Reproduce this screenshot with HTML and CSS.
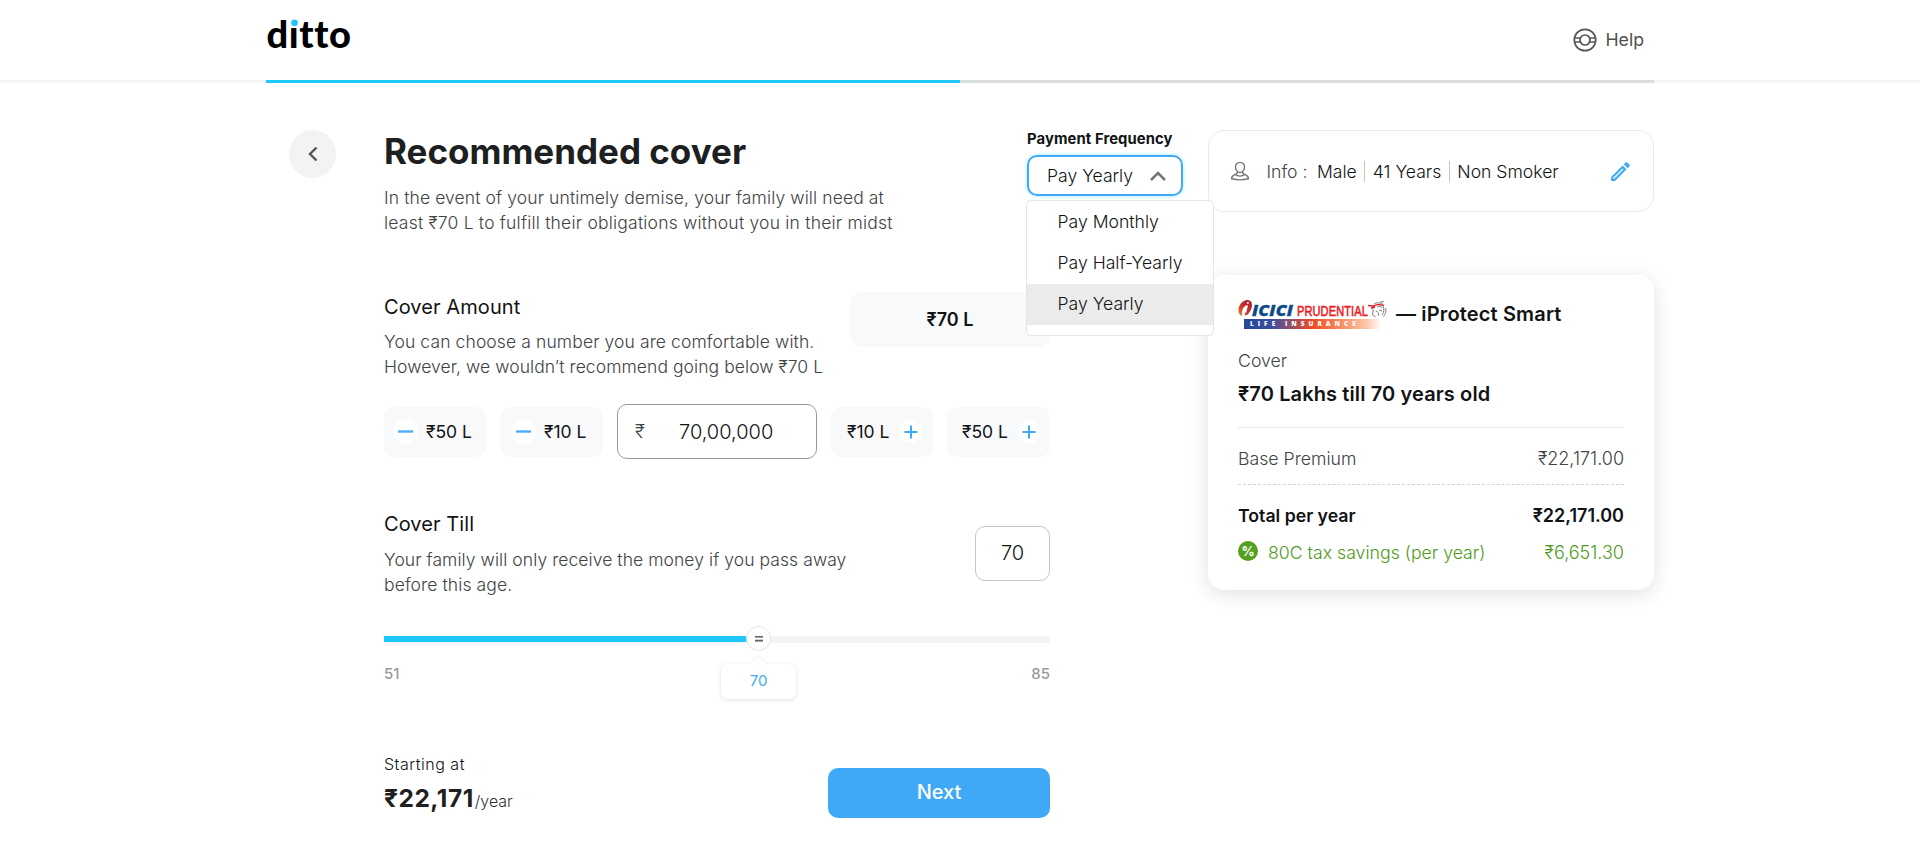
FILE: index.html
```html
<!DOCTYPE html>
<html lang="en">
<head>
<meta charset="utf-8">
<title>Ditto – Recommended cover</title>
<link rel="stylesheet" href="styles.css">
</head>
<body>
<header class="topbar">
  <div class="topbar-inner">
    <svg class="brand" width="90" height="44" viewBox="0 0 90 44" role="img">
      <text class="brand-text" x="-.5" y="38" textLength="84.500" lengthAdjust="spacing">ditto</text>
      <rect x="22.500" y="6" width="10" height="11.500" fill="#fff"/>
      <circle cx="27.500" cy="12.800" r="3.400" fill="#1ec8ff"/>
    </svg>
    <a class="help">
      <svg width="24" height="24" viewBox="0 0 24 24" fill="none" stroke="#555" stroke-width="1.7"><circle cx="12" cy="12" r="10.700"/><circle cx="12" cy="12" r="5"/><path d="M1.600 10h5.600M1.600 14h5.600M16.800 10h5.600M16.800 14h5.600"/></svg>
      <span>Help</span>
    </a>
  </div>
</header>
<div class="progress"><div class="progress-track"><div class="progress-fill"></div></div></div>

<main class="page">
  <button class="back" aria-label="Back">
    <svg width="12" height="18" viewBox="0 0 12 18" fill="none" stroke="#555" stroke-width="2.4"><path d="M9.500 2.500 3 9l6.500 6.500"/></svg>
  </button>

  <section class="planner">
    <div class="intro">
      <div class="intro-text">
        <h1>Recommended cover</h1>
        <p class="desc"><span class="track-2">In the event of your untimely demise, your family will need at</span><br><span class="track-3">least ₹70 L to fulfill their obligations without you in their midst</span></p>
      </div>
      <div class="frequency">
        <div class="frequency-label">Payment Frequency</div>
        <div class="select">
          <span>Pay Yearly</span>
          <svg width="16" height="10" viewBox="0 0 16 10" fill="none" stroke="#757575" stroke-width="2.6"><path d="M1 9l7-7 7 7"/></svg>
        </div>
        <ul class="menu">
          <li>Pay Monthly</li>
          <li>Pay Half-Yearly</li>
          <li class="active">Pay Yearly</li>
        </ul>
      </div>
    </div>

    <div class="field amount">
      <div>
        <h2>Cover Amount</h2>
        <p class="desc"><span class="track-2">You can choose a number you are comfortable with.</span><br><span class="track-1">However, we wouldn’t recommend going below ₹70 L</span></p>
      </div>
      <div class="amount-badge">₹70 L</div>
    </div>

    <div class="stepper">
      <button class="step minus"><i><svg width="15" height="3"><rect y=".3" width="15" height="2.400" fill="#4aaef8"/></svg></i><span>₹50 L</span></button>
      <button class="step minus inner"><i><svg width="15" height="3"><rect y=".3" width="15" height="2.400" fill="#4aaef8"/></svg></i><span>₹10 L</span></button>
      <div class="amount-input"><span class="currency">₹</span><span>70,00,000</span></div>
      <button class="step plus inner"><span>₹10 L</span><i><svg width="14" height="14" stroke="#3fa9f8" stroke-width="2"><path d="M7 .5v13M.5 7h13"/></svg></i></button>
      <button class="step plus"><span>₹50 L</span><i><svg width="14" height="14" stroke="#3fa9f8" stroke-width="2"><path d="M7 .5v13M.5 7h13"/></svg></i></button>
    </div>

    <div class="field till">
      <div>
        <h2>Cover Till</h2>
        <p class="desc"><span class="track-1">Your family will only receive the money if you pass away</span><br><span class="track-2">before this age.</span></p>
      </div>
      <div class="age-input">70</div>
    </div>

    <div class="slider">
      <div class="slider-fill" style="width:374px"></div>
      <div class="knob" style="left:374px"><svg width="8" height="6" fill="#666"><rect width="8" height="1.600"/><rect y="3.700" width="8" height="1.900"/></svg></div>
      <div class="bubble" style="left:374px">70</div>
    </div>
    <div class="range"><span>51</span><span>85</span></div>

    <div class="actions">
      <div>
        <div class="starting">Starting at</div>
        <div class="price"><b>₹22,171</b><span>/year</span></div>
      </div>
      <button class="next">Next</button>
    </div>
  </section>

  <aside class="summary">
    <div class="info">
      <svg class="person" width="20" height="20" viewBox="0 0 20 20" fill="none" stroke="#757575" stroke-width="1.400"><path d="M10 1.400c-2.900 0-4.600 2-4.500 4.700.1 2.700 1.800 5.500 4.500 5.500s4.400-2.800 4.500-5.500C14.600 3.400 12.900 1.400 10 1.400z"/><path d="M7.400 10.900c0 1.800-1 2.200-3 2.900-1.900.7-2.800 1.800-2.800 4 4.500 1.200 12.300 1.200 16.800 0 0-2.200-.9-3.300-2.800-4-2-.7-3-1.100-3-2.900M6 13.400c1.200 2.300 6.800 2.300 8 0"/></svg>
      <span class="info-label">Info :</span>
      <span class="facts"><span>Male</span><i></i><span>41 Years</span><i></i><span>Non Smoker</span></span>
      <svg class="pencil" width="25" height="25" viewBox="0 0 24 24" fill="#3fa9f8"><path d="M14.060 9.020l.92.92L5.920 19H5v-.92l9.060-9.060M17.660 3c-.25 0-.51.1-.7.290l-1.830 1.830 3.750 3.750 1.830-1.830c.39-.39.39-1.020 0-1.410l-2.340-2.340c-.2-.2-.45-.29-.68-.29zM14.060 6.190 3 17.250V21h3.750L17.810 9.940l-3.750-3.750z"/></svg>
    </div>

    <div class="quote">
      <div class="plan">
        <svg class="insurer" width="151" height="33" viewBox="0 0 151 33" role="img">
          <defs>
            <linearGradient id="strip"><stop offset="0" stop-color="#24489b"/><stop offset=".2" stop-color="#3a4f9f"/><stop offset=".33" stop-color="#8d5070"/><stop offset=".5" stop-color="#f04a23"/><stop offset=".7" stop-color="#f68a5c"/><stop offset=".9" stop-color="#fbc9ae"/><stop offset="1" stop-color="#fff"/></linearGradient>
            <linearGradient id="flame" x1="0" y1="1" x2="1" y2="0"><stop offset="0" stop-color="#f58220"/><stop offset=".45" stop-color="#c9302c"/><stop offset="1" stop-color="#a3202e"/></linearGradient>
          </defs>
          <path d="M4 17C-2 15 0 4 7 1.500c6-2 8 2.500 6.500 7.500-1.200 4.500-4.500 7.500-6 7.500C5.800 16 8 10 9 6.500 6.500 5.500 3 11 4 17z" fill="url(#flame)"/>
          <path d="M9.200 6.500 7.400 13.500" stroke="#fff" stroke-width="1.500"/><circle cx="9.800" cy="3.900" r="1" fill="#fff"/>
          <text class="icici" x="14" y="17" textLength="41" lengthAdjust="spacingAndGlyphs">ICICI</text>
          <text class="pru" x="59" y="17" textLength="71" lengthAdjust="spacingAndGlyphs">PRUDENTIAL</text>
          <rect x="6" y="20" width="137" height="10" fill="url(#strip)"/>
          <text class="life" x="12" y="27.300" textLength="106" xml:space="preserve">LIFE INSURANCE</text>
          <g fill="none" stroke="#77756f" stroke-width=".9"><path d="M136 5c3-2 7-1.500 9 .5M134.500 9c1 2 .5 4 0 7l3 2M139 8c2-1 4-.5 5 1M138 12c2 .5 3 2 2.500 5M145 7c1.500 3 1 6-1 9M148 9c0 3-.5 6-2.500 8.500M141 11l3 1M142 3l4-.5"/></g>
          <path d="M130 6.500l5 .5 5-1.500 6 .8M133 9l4-1" stroke="#e0202c" stroke-width="1.300" fill="none"/>
        </svg>
        <span>— iProtect Smart</span>
      </div>
      <div class="cover-label">Cover</div>
      <div class="cover-value">₹70 Lakhs till 70 years old</div>
      <div class="line premium"><span>Base Premium</span><span class="sum">₹22,171.00</span></div>
      <div class="line total"><span>Total per year</span><span class="sum">₹22,171.00</span></div>
      <div class="line tax"><span class="tax-label"><i class="pct">%</i><span>80C tax savings (per year)</span></span><span class="sum">₹6,651.30</span></div>
    </div>
  </aside>
</main>
</body>
</html>
```
FILE: styles.css
```css
* { box-sizing: border-box; }
body { margin: 0; background: #fff; color: #111314; font-family: Inter, "Noto Sans", sans-serif; font-size: 18px; font-weight: 300; overflow: hidden; }
h1, h2, p, ul { margin: 0; padding: 0; font-weight: inherit; }
button { border: 0; padding: 0; font: inherit; color: inherit; }
svg { display: block; flex: none; }
i { font-style: normal; }

.topbar { height: 80px; }
.topbar-inner { width: 1388px; margin: 0 auto; padding: 10px 10px 0 1px; display: flex; justify-content: space-between; align-items: flex-start; }
.brand { overflow: visible; }
.brand-text { font-family: Lato, sans-serif; font-weight: 900; font-size: 38px; fill: #000; font-variant-ligatures: none; }
.help { display: flex; align-items: center; gap: 8px; height: 59px; color: #4e5052; font-weight: 400; font-size: 17.700px; }
.progress { height: 3px; background: linear-gradient(#f1f2f2, #fafafa); }
.progress-track { width: 1388px; height: 3px; margin: 0 auto; background: #d9dddf; }
.progress-fill { width: 50%; height: 3px; background: #1ec8ff; }

.page { width: 1388px; margin: 47px auto 0; padding-left: 23px; display: flex; align-items: flex-start; }
.back { width: 47px; height: 48px; border-radius: 50%; background: #f2f3f5; display: flex; align-items: center; justify-content: center; }
.planner { width: 824px; margin-left: 48px; }
.intro { display: flex; height: 162px; }
.intro-text { width: 643px; }
h1 { font-size: 35px; line-height: 43px; font-weight: 700; color: #1d1f20; }
h2 { font-size: 20px; line-height: 26px; font-weight: 400; letter-spacing: .08px; }
.desc { font-size: 17.500px; line-height: 25px; color: #404345; white-space: nowrap; }
.intro .desc { margin-top: 12px; }
.track-1 { letter-spacing: .07px; }
.track-2 { letter-spacing: .11px; }
.track-3 { letter-spacing: .21px; }

.frequency { width: 156px; position: relative; }
.frequency-label { font-size: 14.800px; line-height: 18px; font-weight: 700; white-space: nowrap; letter-spacing: .1px; }
.select { margin-top: 7px; height: 41px; border: 2px solid #3fa9f8; border-radius: 10px; box-shadow: 0 0 4px #9fe6fd; padding: 0 15px 0 18px; display: flex; align-items: center; justify-content: space-between; font-size: 17.600px; }
.menu { position: absolute; z-index: 5; left: -1px; top: 70px; width: 188px; height: 136px; padding-top: 1px; background: #fff; border: 1px solid #e3e5e6; border-radius: 5px; list-style: none; font-size: 17.600px; }
.menu li { height: 41px; line-height: 40px; padding-left: 30.500px; }
.menu .active { background: #ebebeb; }

.field { width: 666px; display: flex; justify-content: space-between; }
.field .desc { margin-top: 9px; }
.amount-badge { width: 200px; height: 55px; border-radius: 12px; background: #f8f9fb; display: flex; align-items: center; justify-content: center; font-size: 18px; font-weight: 600; }
.amount > div:first-child { padding-top: 2px; }

.stepper { width: 666px; margin-top: 25px; display: grid; grid-template-columns: 102px 103px 200px 102px 103px; gap: 14px; align-items: center; }
.step { height: 50px; border-radius: 10px; background: #f8f9fb; display: flex; align-items: center; font-weight: 400; font-size: 17.500px; }
.step i { width: 25px; height: 25px; border-radius: 50%; background: #fff; display: flex; align-items: center; justify-content: center; }
.minus { padding-left: 9px; gap: 8px; }
.minus.inner { padding-left: 11px; }
.plus { padding-left: 15px; gap: 10px; }
.plus.inner { padding-left: 16px; }
.plus i { width: 23px; height: 23px; }
.amount-input { height: 55px; border: 1px solid #949a9c; border-radius: 10px; display: flex; align-items: center; padding-left: 17px; font-size: 20px; }
.currency { width: 44px; color: #404345; font-size: 19px; }

.till { margin-top: 52px; }
.till .desc { margin-top: 10px; }
.age-input { margin-top: 15px; width: 75px; height: 55px; border: 1px solid #c2c5c7; border-radius: 10px; display: flex; align-items: center; justify-content: center; font-size: 20px; padding-bottom: 2px; }

.slider { width: 666px; height: 7px; margin-top: 39px; border-radius: 4px; background: #f2f3f5; position: relative; }
.slider-fill { height: 6px; background: #1ec8ff; }
.knob { position: absolute; top: -10px; width: 25px; height: 25px; margin-left: -12px; border: 1px solid #e6e6e6; border-radius: 50%; background: #fff; display: flex; align-items: center; justify-content: center; }
.bubble { position: absolute; top: 28px; width: 75px; height: 35px; margin-left: -37px; border-radius: 7px; background: #fff; box-shadow: 0 1px 4px rgba(0,0,0,.13); color: #3fa9f8; font-size: 15px; font-weight: 400; line-height: 34px; text-align: center; }
.bubble::before { content: ""; position: absolute; left: 29px; top: -8px; border: 8px solid transparent; border-top: 0; border-bottom-color: #fff; filter: drop-shadow(0 -1px 1px rgba(0,0,0,.07)); }
.range { width: 666px; margin-top: 21px; display: flex; justify-content: space-between; color: #999; font-size: 15px; font-weight: 500; line-height: 20px; }

.actions { width: 666px; margin-top: 70px; display: flex; justify-content: space-between; }
.starting { font-size: 16px; line-height: 20px; letter-spacing: .5px; }
.price { display: flex; align-items: baseline; gap: 1px; margin-top: 9px; font-size: 16px; line-height: 30px; }
.price b { font-size: 24.500px; font-weight: 700; letter-spacing: .5px; color: #1d1f20; }
.price span { color: #333; }
.next { margin-top: 14px; width: 222px; height: 50px; padding-bottom: 2px; border-radius: 10px; background: #3fa9f8; color: #fff; font-size: 20px; font-weight: 500; }

.summary { width: 446px; }
.info { height: 82px; border: 1px solid #e8eaeb; border-radius: 16px; display: flex; align-items: center; padding: 0 20px 0 21px; white-space: nowrap; font-size: 17.600px; }
.info-label { margin-left: 16.500px; color: #404345; width: 50.500px; }
.facts { display: flex; align-items: center; gap: 7.500px; }
.facts i { width: 1px; height: 21px; background: #c4c4c4; }
.pencil { margin-left: auto; }

.quote { margin-top: 63px; height: 315px; border-radius: 16px; box-shadow: 0 4px 20px rgba(0,0,0,.12); padding: 24px 30px; background: #fff; font-size: 17.700px; }
.plan { display: flex; height: 33px; align-items: center; gap: 7px; font-size: 20px; line-height: 31px; font-weight: 600; letter-spacing: .15px; }
.plan span { padding-bottom: 2px; }
.icici { font: italic 800 15px "Open Sans", sans-serif; fill: #0c4b8a; stroke: #0c4b8a; stroke-width: .3px; }
.pru { font: 400 15px "Liberation Sans", sans-serif; fill: #ed1c24; stroke: #ed1c24; stroke-width: .6px; }
.life { font: 800 6.500px "Open Sans", sans-serif; fill: #fff; }
.cover-label { margin-top: 17px; line-height: 24px; color: #404345; }
.cover-value { margin-top: 8px; height: 47px; line-height: 27px; border-bottom: 1px solid #e6e8e9; font-size: 20px; font-weight: 600; letter-spacing: .12px; }
.line { display: flex; justify-content: space-between; line-height: 24px; }
.sum { font-size: 18px; }
.premium { padding-top: 19px; height: 57px; border-bottom: 1px dashed #d0d2d3; color: #404345; }
.total { margin-top: 19px; font-weight: 600; }
.tax { margin-top: 13px; color: #4f9a1b; }
.tax-label { display: flex; gap: 10px; }
.pct { width: 20px; height: 20px; border-radius: 50%; background: #56a021; color: #fff; font-weight: 700; font-size: 13px; line-height: 20px; text-align: center; }
```
